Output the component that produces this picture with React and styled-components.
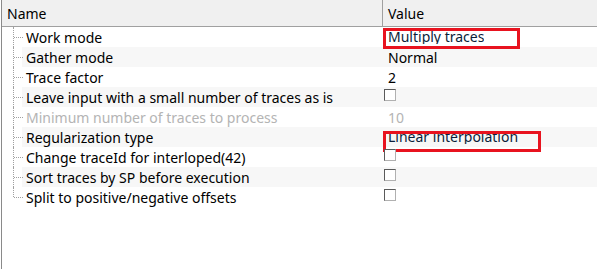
import React from "react";
import styled, { createGlobalStyle } from "styled-components";

const GlobalStyle = createGlobalStyle`
  html, body { margin: 0; padding: 0; background: #fff; }
  body { font-family: "Noto Sans", "Open Sans", sans-serif; }
`;

const rows = [
  { name: "Work mode", value: "Multiply traces", mark: { top: 1, width: 137 } },
  { name: "Gather mode", value: "Normal" },
  { name: "Trace factor", value: "2" },
  { name: "Leave input with a small number of traces as is", check: true },
  { name: "Minimum number of traces to process", value: "10", disabled: true },
  { name: "Regularization type", value: "Linear interpolation", mark: { top: 4, width: 158 } },
  { name: "Change traceId for interloped(42)", check: true },
  { name: "Sort traces by SP before execution", check: true },
  { name: "Split to positive/negative offsets", check: true },
];

export default function App() {
  return (
    <>
      <GlobalStyle />
      <Grid>
        <Header>
          <HeadCell>Name</HeadCell>
          <HeadCell>Value</HeadCell>
        </Header>
        {rows.map((r, i) => (
          <Row key={r.name}>
            <Branch $last={i === rows.length - 1} />
            <Band $alt={i % 2 === 1}>
              <NameCell $disabled={r.disabled}>{r.name}</NameCell>
              <ValueCell $disabled={r.disabled}>
                {r.check ? <Check /> : r.mark ? <Editor>{r.value}</Editor> : r.value}
                {r.mark && <Highlight $top={r.mark.top} $width={r.mark.width} />}
              </ValueCell>
            </Band>
          </Row>
        ))}
      </Grid>
    </>
  );
}

const Grid = styled.div`
  margin-left: 1px;
  border-left: 1px solid #8a8a8a;
  height: 269px;
  box-sizing: border-box;
  font-size: 14px;
  color: #000;
`;

const Header = styled.div`
  display: grid;
  grid-template-columns: 381px 1fr;
  height: 26px;
  background: #f0f0f0;
  border-bottom: 1px solid #a0a0a0;
`;

const HeadCell = styled.div`
  display: flex;
  align-items: center;
  padding-left: 5px;
  border-right: 1px solid #a0a0a0;
  &:last-child { border-right: none; }
`;

const Row = styled.div`
  display: flex;
  height: 20px;
`;

const Branch = styled.div`
  position: relative;
  width: 20px;
  flex: none;
  &::before {
    content: "";
    position: absolute;
    left: 11px;
    top: 0;
    height: ${(p) => (p.$last ? "10px" : "20px")};
    border-left: 1px dotted #a0a0a0;
  }
  &::after {
    content: "";
    position: absolute;
    left: 12px;
    top: 10px;
    width: 9px;
    border-top: 1px dotted #a0a0a0;
  }
`;

const Band = styled.div`
  flex: 1;
  display: grid;
  grid-template-columns: 361px 1fr;
  background: ${(p) => (p.$alt ? "#f7f7f7" : "#fff")};
`;

const NameCell = styled.div`
  display: flex;
  align-items: center;
  padding-left: 4px;
  white-space: nowrap;
  color: ${(p) => (p.$disabled ? "#b4b4b4" : "#000")};
`;

const ValueCell = styled.div`
  position: relative;
  display: flex;
  align-items: center;
  padding-left: 5px;
  white-space: nowrap;
  color: ${(p) => (p.$disabled ? "#b4b4b4" : "#000")};
`;

const Editor = styled.span`
  align-self: flex-start;
  height: 17px;
  line-height: 20px;
  overflow: hidden;
  color: #0b1e3a;
`;

const Check = styled.span`
  width: 10px;
  height: 10px;
  margin-left: -4px;
  margin-top: -4px;
  border: 1px solid #5a5a5a;
  border-right-color: #b0b0b0;
  border-bottom-color: #b0b0b0;
  background: #fff;
`;

const Highlight = styled.span`
  position: absolute;
  left: 0;
  top: ${(p) => p.$top}px;
  width: ${(p) => p.$width}px;
  height: 21px;
  box-sizing: border-box;
  border: 3px solid #e8131f;
`;
